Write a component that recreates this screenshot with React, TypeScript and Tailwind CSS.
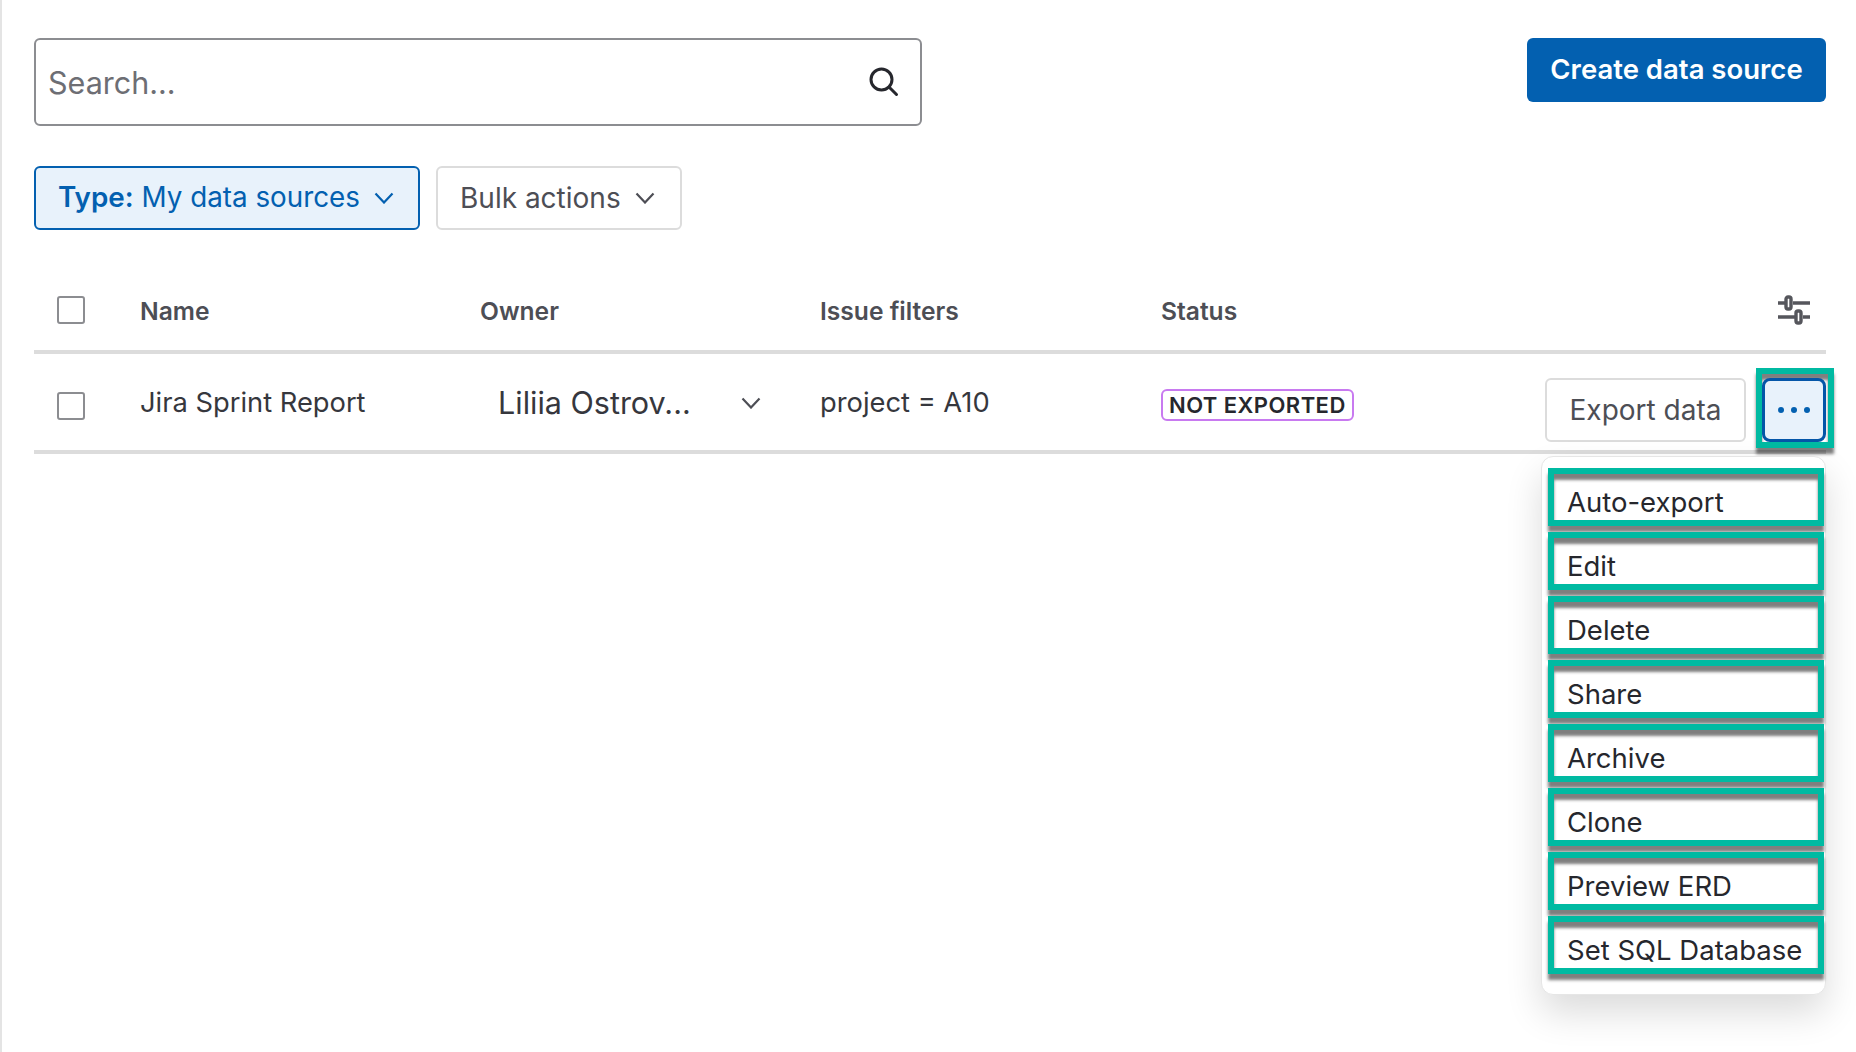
const menuItems = ['Auto-export', 'Edit', 'Delete', 'Share', 'Archive', 'Clone', 'Preview ERD', 'Set SQL Database']

const highlight =
  'border-[6px] border-[#00baa2] shadow-[0_6px_3px_rgba(0,0,0,0.5),inset_0_6px_3px_rgba(0,0,0,0.5)]'

function Chevron({ className }: { className?: string }) {
  return (
    <svg width="20" height="12" viewBox="0 0 20 12" fill="none" stroke="currentColor" strokeWidth="2.2" className={className}>
      <path d="M1.5 1.5 10 10.5 18.5 1.5" />
    </svg>
  )
}

function Checkbox() {
  return <div className="h-[28px] w-[28px] rounded-[3px] border-2 border-[#8c8d91] bg-white" />
}

export default function App() {
  return (
    <div className="h-[1052px] overflow-hidden border-l-2 border-[#e4e4e4] bg-white pt-[38px] pr-[30px] pl-[32px] font-['Inter',sans-serif] text-[#4d4e55]">
      {/* Search + create */}
      <div className="flex items-start justify-between">
        <div className="flex h-[88px] w-[888px] items-center justify-between rounded-[6px] border-2 border-[#8c8d91] pr-[21px] pl-[12px]">
          <span className="pt-[2px] text-[30.5px] text-[#6d6e74]">Search...</span>
          <svg width="32" height="32" viewBox="0 0 32 32" fill="none" stroke="#26272d" strokeWidth="3">
            <circle cx="14.5" cy="13.5" r="10.5" />
            <path d="M22.5 21.5 29.5 28.5" strokeLinecap="round" />
          </svg>
        </div>
        <button className="flex h-[64px] w-[299px] items-center justify-center rounded-[6px] bg-[#0360b0] text-[27.5px] font-semibold text-white">
          Create data source
        </button>
      </div>

      {/* Filters */}
      <div className="mt-[40px] flex gap-[16px]">
        <button className="flex h-[64px] w-[386px] items-center gap-[14px] rounded-[6px] border-2 border-[#0360b0] bg-[#e8f2fb] pl-[22px] text-[27.8px] text-[#0360b0]">
          <span>
            <span className="font-semibold">Type:</span> My data sources
          </span>
          <Chevron />
        </button>
        <button className="flex h-[64px] w-[246px] items-center gap-[14px] rounded-[6px] border-2 border-[#dcdcdc] bg-white pl-[22px] text-[28px]">
          Bulk actions
          <Chevron />
        </button>
      </div>

      {/* Table header */}
      <div className="mt-[40px] grid h-[84px] grid-cols-[106px_340px_340px_340px_1fr] items-center border-b-4 border-[#dcdcdc] text-[24.6px] font-semibold">
        <div className="pl-[23px]">
          <Checkbox />
        </div>
        <div className="pt-[2px]">Name</div>
        <div className="pt-[2px]">Owner</div>
        <div className="pt-[2px]">Issue filters</div>
        <div className="flex items-center justify-between pr-[15px]">
          <span className="pt-[2px] pl-[1px]">Status</span>
          <svg width="34" height="30" viewBox="0 0 34 30" fill="none" stroke="#55565c" strokeWidth="3.4">
            <path d="M1 8h7M16 8h17M1 22h17M26 22h7" />
            <rect x="9" y="2" width="5" height="12" rx="2" />
            <rect x="19" y="16" width="5" height="12" rx="2" />
          </svg>
        </div>
      </div>

      {/* Table row */}
      <div className="grid h-[100px] grid-cols-[106px_340px_340px_340px_1fr] items-center border-b-4 border-[#dcdcdc] pt-[2px] text-[27.3px] text-[#36373d]">
        <div className="pt-[6px] pl-[23px]">
          <Checkbox />
        </div>
        <div>Jira Sprint Report</div>
        <div className="flex items-center justify-between pr-[59px] pl-[18px]">
          <span className="text-[30.5px]">Liliia Ostrov...</span>
          <Chevron className="text-[#4d4e55]" />
        </div>
        <div>project = A10</div>
        <div className="relative flex items-center justify-between">
          <span className="mt-[4px] ml-[1px] rounded-[6px] border-2 border-[#c87af0] px-[6px] text-[22px] leading-[28px] font-semibold tracking-[0.45px] text-[#26272d]">
            NOT EXPORTED
          </span>
          <div className="mt-[14px] flex h-[64px] items-center">
            <button className="h-[64px] w-[201px] rounded-[6px] border-2 border-[#dcdcdc] bg-white text-[28px] text-[#4d4e55]">
              Export data
            </button>
            <div className={`-mr-[8px] -mb-[6px] ml-[10px] flex h-[80px] w-[78px] items-end self-end bg-white ${highlight}`}>
              <div className="flex h-[64px] w-[64px] items-center justify-center gap-[7px] rounded-[8px] border-[3px] border-[#0456a8] bg-[#e8f2fb]">
                <span className="h-[6px] w-[6px] rounded-full bg-[#0360b0]" />
                <span className="h-[6px] w-[6px] rounded-full bg-[#0360b0]" />
                <span className="h-[6px] w-[6px] rounded-full bg-[#0360b0]" />
              </div>
            </div>
          </div>

          {/* Actions menu */}
          <div className="absolute top-[92px] right-0 flex h-[539px] w-[285px] flex-col gap-[6px] rounded-[12px] border border-[#e6e6e6] bg-white pt-[11px] pr-[1px] pl-[6px] shadow-[0_18px_36px_rgba(0,0,0,0.14)]">
            {menuItems.map((item) => (
              <div key={item} className={`flex h-[58px] shrink-0 items-center pt-[11px] pl-[13px] text-[27.5px] whitespace-nowrap text-[#26272d] ${highlight}`}>
                {item}
              </div>
            ))}
          </div>
        </div>
      </div>
    </div>
  )
}
